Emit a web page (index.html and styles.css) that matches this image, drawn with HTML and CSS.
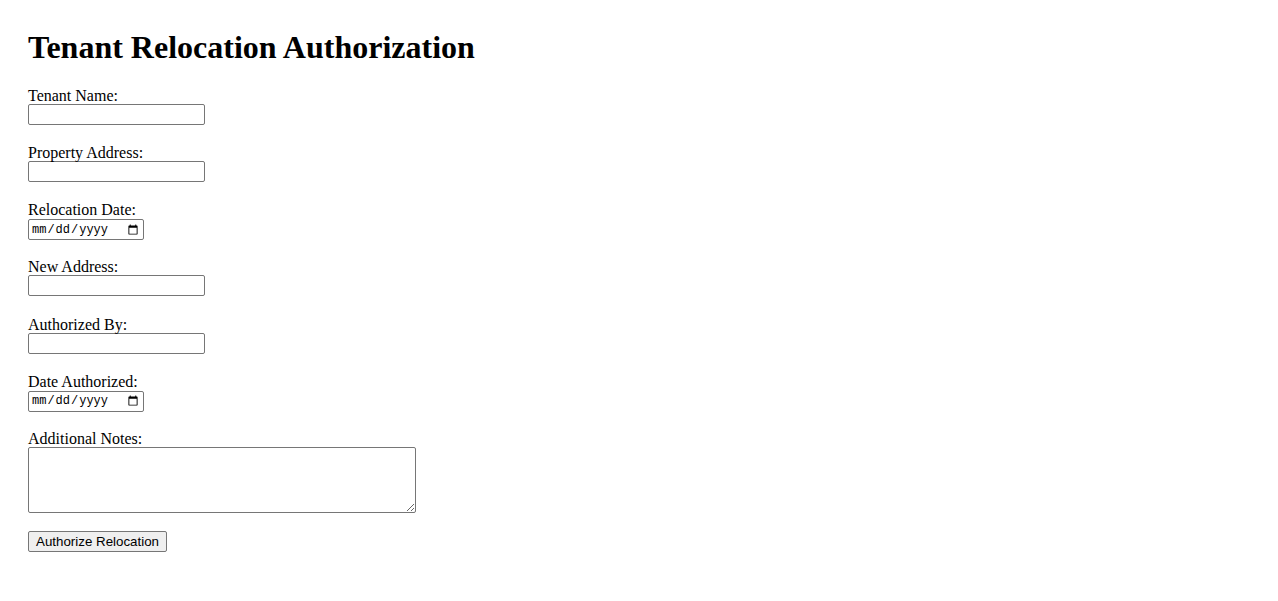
FILE: index.html
```html
<!DOCTYPE html>
<html>
<head>
<meta charset="utf-8">
<title>Tenant Relocation Authorization</title>
<link rel="stylesheet" href="styles.css">
</head>
<body>
<div class="page">
  <h1 class="title">Tenant Relocation Authorization</h1>
  <form class="form">
    <div class="field">
      <label class="label" for="tenant">Tenant Name:</label>
      <input class="text-input" type="text" id="tenant">
    </div>
    <div class="field">
      <label class="label" for="property">Property Address:</label>
      <input class="text-input" type="text" id="property">
    </div>
    <div class="field">
      <label class="label" for="reldate">Relocation Date:</label>
      <input class="date-input" type="date" id="reldate">
    </div>
    <div class="field">
      <label class="label" for="newaddr">New Address:</label>
      <input class="text-input" type="text" id="newaddr">
    </div>
    <div class="field">
      <label class="label" for="authby">Authorized By:</label>
      <input class="text-input" type="text" id="authby">
    </div>
    <div class="field">
      <label class="label" for="authdate">Date Authorized:</label>
      <input class="date-input" type="date" id="authdate">
    </div>
    <div class="field">
      <label class="label" for="notes">Additional Notes:</label>
      <textarea class="notes" id="notes" rows="4"></textarea>
    </div>
    <button class="submit" type="submit">Authorize Relocation</button>
  </form>
</div>
</body>
</html>
```
FILE: styles.css
```css
html, body {
  margin: 0;
  padding: 0;
  background: #ffffff;
}
body {
  font-family: "Liberation Serif", "Times New Roman", serif;
  font-size: 16px;
  color: #000;
}
.page {
  padding: 29px 28px 20px 28px;
}
.title {
  font-size: 32px;
  font-weight: bold;
  margin: 0 0 19px 0;
  line-height: 37px;
}
.form {
  margin: 0;
}
.field {
  margin-bottom: 17.17px;
}
.label {
  display: block;
  line-height: 18px;
  height: 17px;
  padding-top: 2px;
}
.text-input,
.date-input {
  display: block;
  box-sizing: border-box;
  height: 21px;
  margin: 0;
  padding: 1px 2px;
  border: 1px solid #767676;
  border-radius: 2px;
  background: #fff;
  font-family: "Liberation Sans", Arial, sans-serif;
  font-size: 13.33px;
}
.text-input {
  width: 177px;
}
.date-input {
  width: 116px;
  margin-top: 1px;
  margin-bottom: -1px;
  font-family: "Liberation Mono", "DejaVu Sans Mono", monospace;
  font-size: 12px;
  color: #000;
}
.notes {
  display: block;
  box-sizing: border-box;
  width: 388px;
  height: 66px;
  margin: 0;
  padding: 2px;
  border: 1px solid #767676;
  border-radius: 2px;
  font-family: "Liberation Mono", monospace;
  font-size: 13.33px;
}
.submit {
  display: block;
  margin: 18px 0 0 0;
  box-sizing: border-box;
  width: 139px;
  height: 21px;
  padding: 1px 6px;
  border: 1px solid #767676;
  border-radius: 2px;
  background: #efefef;
  font-family: "Liberation Sans", Arial, sans-serif;
  font-size: 13.33px;
  color: #000;
}
```
